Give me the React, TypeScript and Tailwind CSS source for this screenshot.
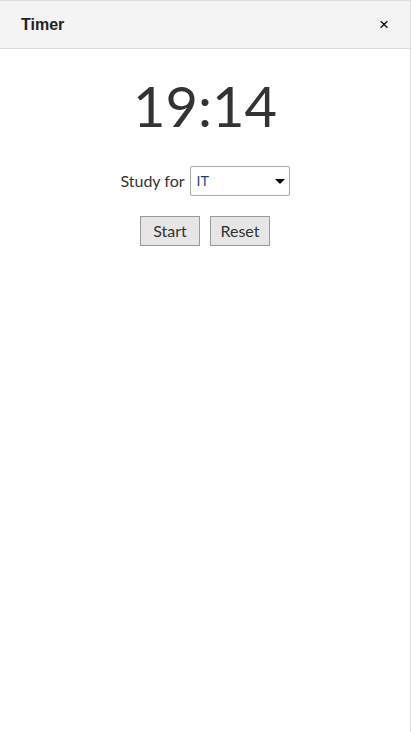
import { useState } from 'react'

export default function App() {
  const [subject, setSubject] = useState('IT')

  return (
    <div className="h-[732px] w-[411px] border-t border-r border-[#dedede] bg-white font-['Lato','Open_Sans',sans-serif] text-[#333]">
      <div className="flex h-[48px] items-center justify-between border-b border-[#dcdcdc] bg-[#f4f4f4] pl-[21px] pr-[21px]">
        <h1 className="font-['Liberation_Sans',Arial,sans-serif] text-[16px] font-bold text-[#222]">Timer</h1>
        <button className="font-['Liberation_Sans',Arial,sans-serif] text-[17px] leading-none text-black">×</button>
      </div>

      <div className="flex flex-col items-center">
        <div className="mt-[21px] text-[56px] leading-[72px] text-[#333]">19:14</div>

        <div className="mt-[24px] flex items-center gap-[5px]">
          <label className="text-[16px]">Study for</label>
          <div className="relative">
            <select
              value={subject}
              onChange={(e) => setSubject(e.target.value)}
              className="h-[30px] w-[100px] appearance-none rounded-[2px] border border-[#aaa] bg-white pl-[6px] font-['Liberation_Sans',Arial,sans-serif] text-[14px] text-[#1c3f73]"
            >
              <option>IT</option>
              <option>Math</option>
              <option>English</option>
            </select>
            <span className="pointer-events-none absolute right-[5px] top-[13px] h-0 w-0 border-l-[5px] border-r-[5px] border-t-[5px] border-l-transparent border-r-transparent border-t-black" />
          </div>
        </div>

        <div className="mt-[20px] flex gap-[10px]">
          <button className="h-[30px] w-[60px] border border-[#999] bg-[#e6e6e6] text-[16px] text-[#333]">Start</button>
          <button className="h-[30px] w-[60px] border border-[#999] bg-[#e6e6e6] text-[16px] text-[#333]">Reset</button>
        </div>
      </div>
    </div>
  )
}
